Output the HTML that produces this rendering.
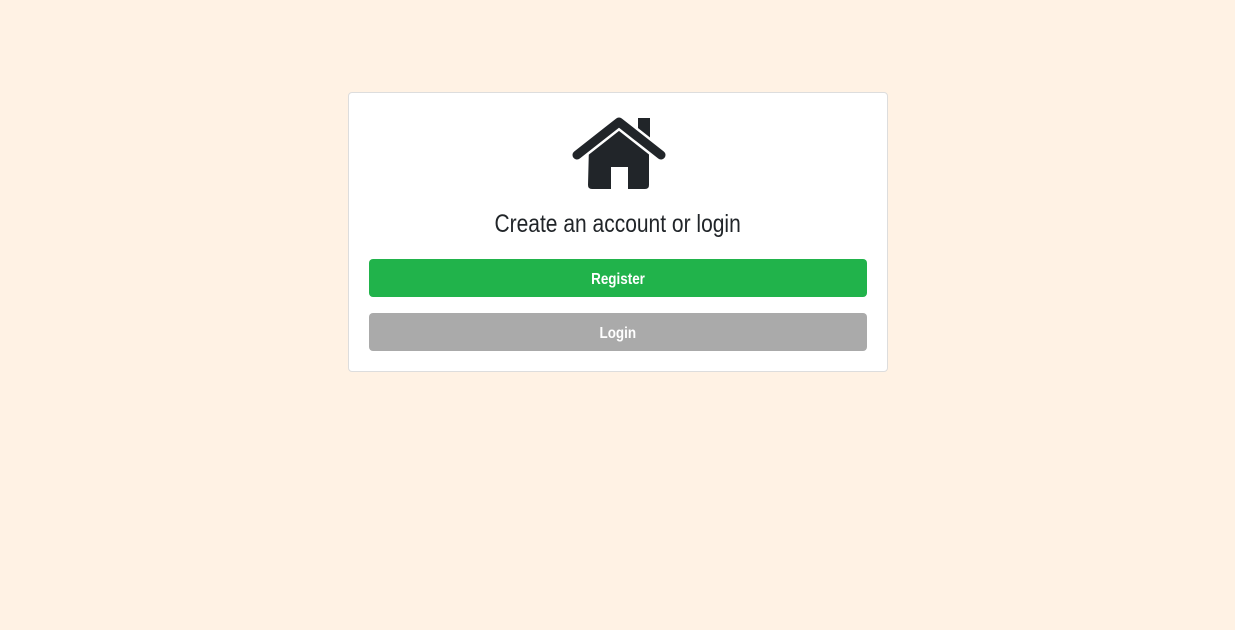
<html><head><style>
body{margin:0;background:#fff2e4;width:1235px;height:630px;font-family:"Liberation Sans",sans-serif;}
.card{position:absolute;left:348px;top:92px;width:538px;height:278px;background:#fff;border:1px solid #ddd;border-radius:4px;}
.t{position:absolute;left:0;width:538px;top:117px;text-align:center;font-size:25px;color:#212529;}
.t span{display:inline-block;transform:scaleX(0.84);}
.b{position:absolute;left:20px;width:498px;height:38px;border-radius:4px;color:#fff;font-weight:bold;font-size:16px;text-align:center;line-height:42px;}
.b span{display:inline-block;transform:scaleX(0.84);}
</style></head><body>
<div class="card">
<svg style="position:absolute;left:0;top:0" width="538" height="120">
<g fill="#212529">
<rect x="289" y="25" width="12" height="22"/>
<path d="M240 53 L270 30 L300 53 L300 92 Q300 96 296 96 L279 96 L279 74 L262 74 L262 96 L243 96 Q239 96 239 92 Z"/>
</g>
<path d="M228 62 L270 29 L312 62" fill="none" stroke="#fff" stroke-width="14" stroke-linecap="round" stroke-linejoin="round"/>
<path d="M228 62 L270 29 L312 62" fill="none" stroke="#212529" stroke-width="9" stroke-linecap="round" stroke-linejoin="round"/>
</svg>
<div class="t"><span>Create an account or login</span></div>
<div class="b" style="top:166px;background:#21b34b"><span>Register</span></div>
<div class="b" style="top:220px;background:#aaa"><span>Login</span></div>
</div>
</body></html>
